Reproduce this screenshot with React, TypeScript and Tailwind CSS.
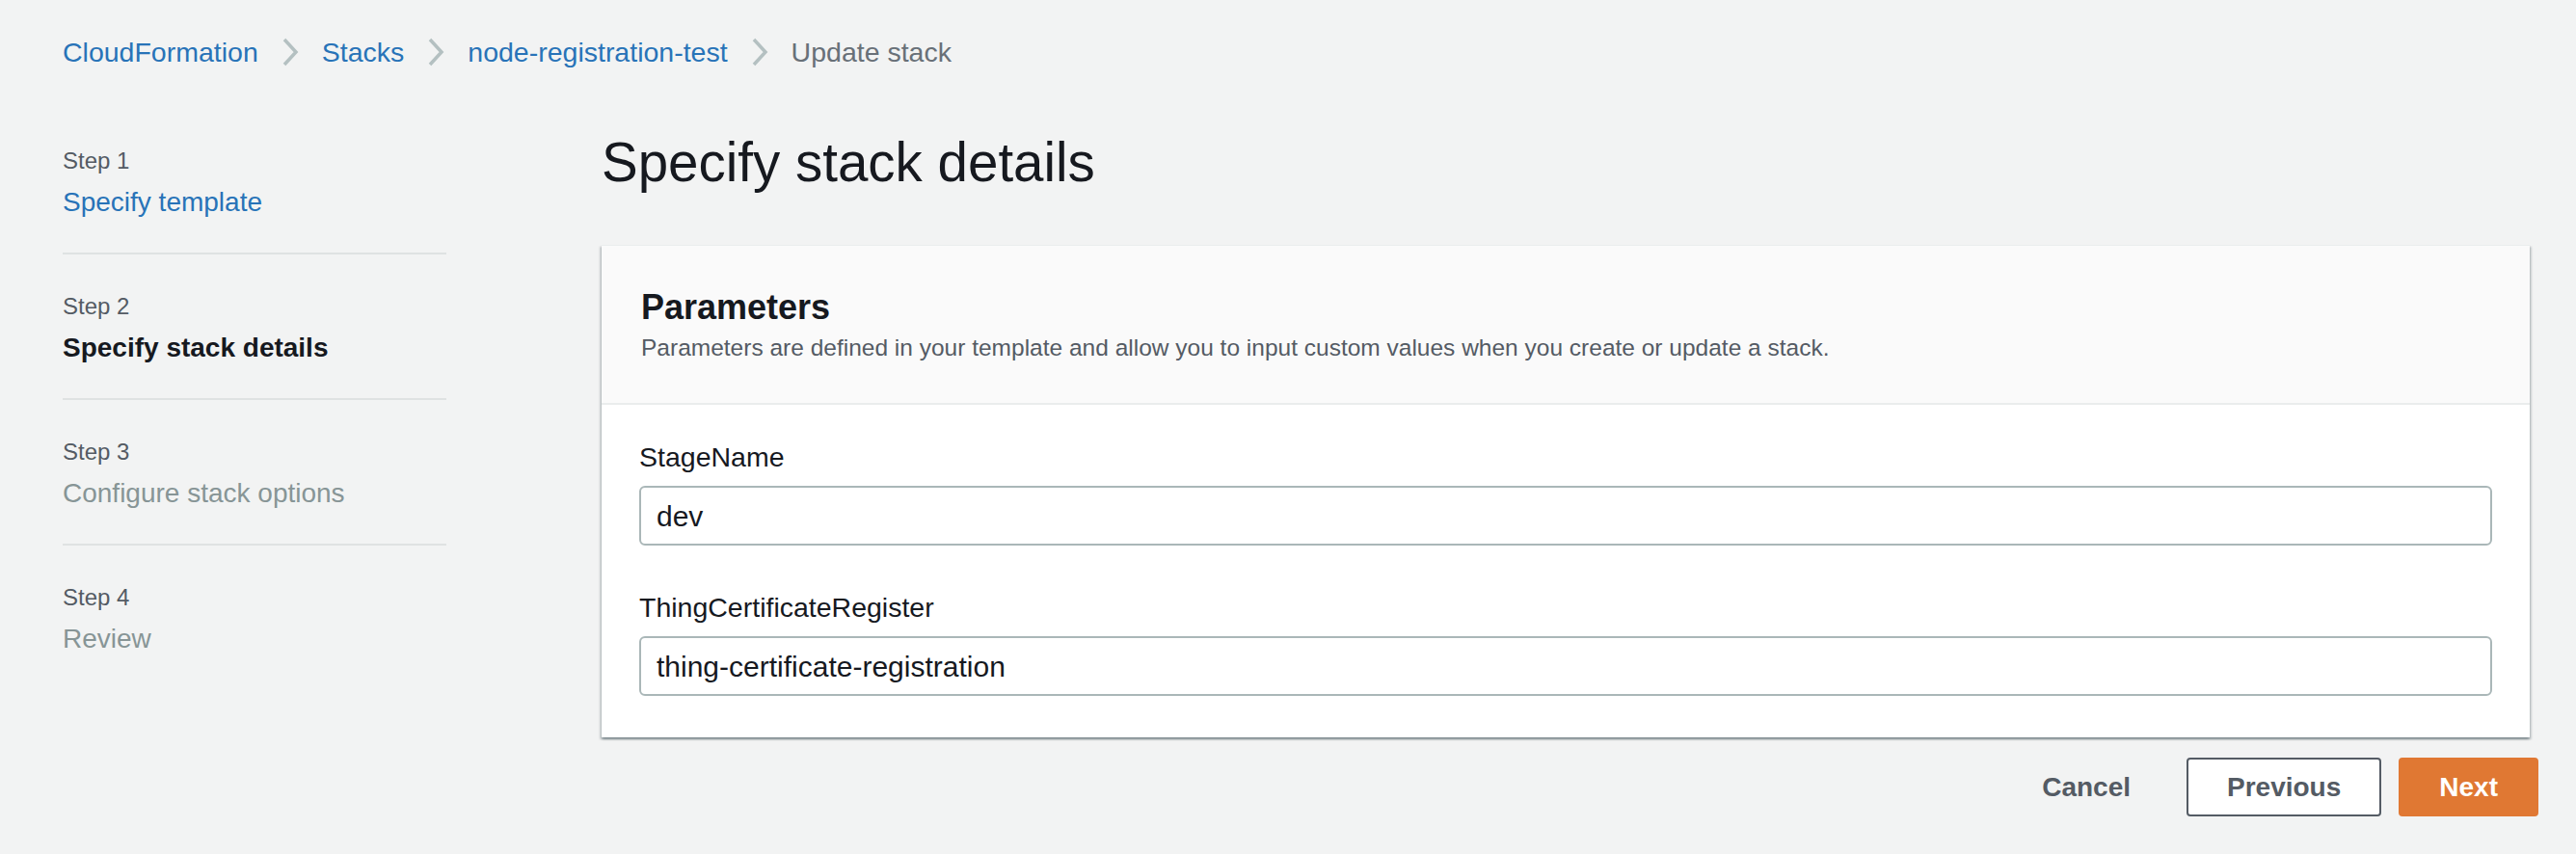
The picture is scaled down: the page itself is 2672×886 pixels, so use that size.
import type { ReactNode } from "react";

const STEPS = [
  { label: "Step 1", title: "Specify template", state: "done" },
  { label: "Step 2", title: "Specify stack details", state: "active" },
  { label: "Step 3", title: "Configure stack options", state: "todo" },
  { label: "Step 4", title: "Review", state: "todo" },
] as const;

const STEP_TITLE: Record<string, string> = {
  done: "text-[#2873b8]",
  active: "font-bold text-[#16191f]",
  todo: "text-[#879596]",
};

const PARAMS = [
  { name: "StageName", value: "dev" },
  { name: "ThingCertificateRegister", value: "thing-certificate-registration" },
];

function Chevron() {
  return (
    <svg width="18" height="30" viewBox="0 0 18 30" className="mx-[24px] shrink-0">
      <polyline points="3,2 15,15 3,28" fill="none" stroke="#b4c0c1" strokeWidth="3.5" />
    </svg>
  );
}

function Crumb({ children, current }: { children: ReactNode; current?: boolean }) {
  return <span className={current ? "text-[#687078]" : "text-[#2873b8]"}>{children}</span>;
}

export default function App() {
  return (
    <div className="min-h-[886px] bg-[#f2f3f3] font-['Liberation_Sans',Arial,sans-serif]">
      <nav className="flex items-center pl-[65px] pt-[34px] text-[28.5px] leading-[40px]">
        <Crumb>CloudFormation</Crumb>
        <Chevron />
        <Crumb>Stacks</Crumb>
        <Chevron />
        <Crumb>node-registration-test</Crumb>
        <Chevron />
        <Crumb current>Update stack</Crumb>
      </nav>

      <div className="flex">
        <ol className="ml-[65px] w-[398px] shrink-0 pt-[39px]">
          {STEPS.map((step, i) => (
            <li
              key={step.label}
              className={`pt-[38px] pb-[32px] ${i < STEPS.length - 1 ? "border-b-2 border-[#dfe2e2]" : ""}`}
            >
              <div className="text-[24px] leading-[32px] text-[#545b64]">{step.label}</div>
              <div className={`mt-[7px] text-[28px] leading-[40px] ${STEP_TITLE[step.state]}`}>
                {step.title}
              </div>
            </li>
          ))}
        </ol>

        <main className="ml-[161px] mr-[48px] flex-1 pt-[63px]">
          <h1 className="text-[56.5px] leading-[64px] text-[#16191f]">Specify stack details</h1>

          <section className="mt-[53px] border-t border-[#eaeded] bg-white shadow-[0_2px_2px_0_rgba(0,28,36,0.3),2px_2px_2px_0_rgba(0,28,36,0.15),-2px_2px_2px_0_rgba(0,28,36,0.15)]">
            <header className="border-b-2 border-[#eaeded] bg-[#fafafa] px-[41px] pt-[42px] pb-[41px]">
              <h2 className="text-[36px] font-bold leading-[44px] text-[#16191f]">Parameters</h2>
              <p className="mt-[4px] text-[24.5px] leading-[32px] text-[#545b64]">
                Parameters are defined in your template and allow you to input custom values when you create or update a stack.
              </p>
            </header>
            <div className="px-[39px] pt-[34px] pb-[43px]">
              {PARAMS.map((p, i) => (
                <div key={p.name} className={i > 0 ? "mt-[44px]" : ""}>
                  <label className="block text-[28.5px] leading-[40px] text-[#16191f]">{p.name}</label>
                  <div className="mt-[10px] flex h-[62px] items-center rounded-[6px] border-2 border-[#aab7b8] bg-white pl-[16px] text-[30px] text-[#16191f]">
                    {p.value}
                  </div>
                </div>
              ))}
            </div>
          </section>

          <div className="-mr-[9px] mt-[21px] flex justify-end gap-[18px] text-[28px] font-bold">
            <button className="h-[61px] px-[40px] text-[#545b64]">Cancel</button>
            <button className="h-[61px] rounded-[4px] border-2 border-[#545b64] bg-white px-[40px] text-[#545b64]">
              Previous
            </button>
            <button className="h-[61px] rounded-[4px] border-2 border-[#e07833] bg-[#e07833] px-[40px] text-white">
              Next
            </button>
          </div>
        </main>
      </div>
    </div>
  );
}
